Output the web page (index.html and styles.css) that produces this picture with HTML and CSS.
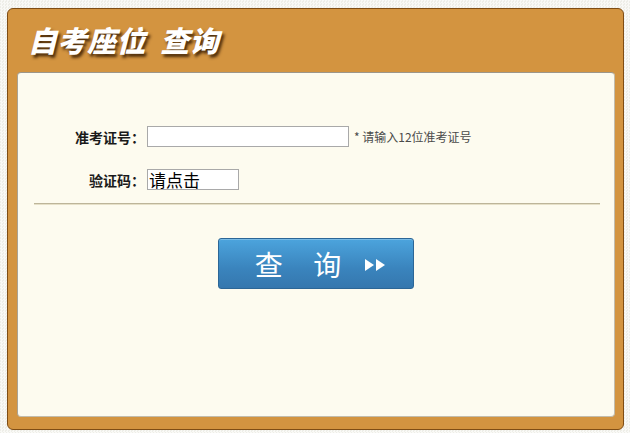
FILE: index.html
```
<!DOCTYPE html>
<html lang="zh-CN">
<head>
    <meta charset="UTF-8">
    <meta name="viewport" content="width=device-width, initial-scale=1.0">
    <title>自考座位查询</title>
    <link rel="stylesheet" href="styles.css">
</head>
<body>
    <div class="box">
        <div class="box-head">
            <h1>自考座位&nbsp; 查询</h1>
        </div>

        <div class="panel">
            <form class="query-form" onsubmit="return false">
                <div class="form-row">
                    <label class="label" for="zkzh">准考证号：</label>
                    <input type="text" id="zkzh" class="text-input long">
                    <span class="hint">* 请输入12位准考证号</span>
                </div>
                <div class="form-row">
                    <label class="label" for="yzm">验证码：</label>
                    <input type="text" id="yzm" class="text-input short" value="请点击">
                </div>

                <div class="divider"></div>

                <div class="actions">
                    <button type="submit" class="query-btn">
                        <span class="btn-text">查&nbsp; 询</span>
                        <span class="arrows"><i></i><i></i></span>
                    </button>
                </div>
            </form>
        </div>
    </div>
</body>
</html>
```

FILE: styles.css
```
body {
    margin: 0;
    padding: 8px 0 0 7px;
    font-family: "Noto Sans CJK SC", "Noto Sans", sans-serif;
    background-color: #f6f6f2;
    background-image: repeating-conic-gradient(#f9f9f6 0% 25%, #eeeee8 0% 50%);
    background-size: 3px 3px;
}

.box {
    width: 615px;
    height: 420px;
    background-color: #d39440;
    border: 1px solid #7f4d14;
    border-radius: 6px;
    display: flex;
    flex-direction: column;
}

.box-head {
    height: 63px;
    padding-left: 20px;
    padding-bottom: 4px;
    box-sizing: border-box;
    display: flex;
    align-items: center;
}

.box-head h1 {
    margin: 0;
    font-size: 29px;
    font-weight: 900;
    font-style: italic;
    color: #fff;
    letter-spacing: 0.5px;
    text-shadow: 2px 3px 3px rgba(50, 25, 0, 0.85);
}

.panel {
    height: 343px;
    margin: 0 8px 0 9px;
    background-color: #fdfbef;
    border: 1px solid #c2bcac;
    border-top-color: #9c968a;
    border-left-color: #a8a294;
    border-radius: 4px;
}

.query-form {
    padding-top: 53px;
}

.form-row {
    display: flex;
    align-items: center;
    height: 21px;
    margin-bottom: 22px;
}

.label {
    width: 127px;
    margin-right: 2px;
    text-align: right;
    font-size: 14px;
    font-weight: bold;
    color: #1a1a1a;
}

.text-input {
    box-sizing: border-box;
    height: 21px;
    padding: 0 2px;
    border: 1px solid #a9a9a9;
    background: #fff;
    font-family: "Noto Sans CJK SC", sans-serif;
}

.text-input.long {
    width: 202px;
}

.text-input.short {
    width: 92px;
    font-size: 17px;
    color: #000;
    padding: 0 1px;
    line-height: 19px;
}

.hint {
    margin-left: 5px;
    font-size: 12px;
    color: #4a4a4a;
}

.divider {
    margin: -9px 14px 0 16px;
    border-top: 1px solid #bdb59a;
    border-bottom: 1px solid #e6e0c8;
}

.actions {
    display: flex;
    justify-content: center;
    padding-top: 33px;
}

.query-btn {
    width: 196px;
    height: 51px;
    display: flex;
    align-items: center;
    justify-content: center;
    gap: 18px;
    padding: 0 0 0 8px;
    border: 1px solid #2c6696;
    border-radius: 3px;
    background: linear-gradient(to bottom, #4ca4dd, #3a84bd 60%, #3577ae);
    box-shadow: inset 0 1px 0 rgba(255, 255, 255, 0.25);
    color: #fff;
    cursor: pointer;
}

.btn-text {
    font-family: "Noto Sans CJK SC", sans-serif;
    font-size: 28px;
    letter-spacing: 6px;
    line-height: 1;
}

.arrows {
    display: flex;
    gap: 2px;
    margin-top: 2px;
}

.arrows i {
    width: 0;
    height: 0;
    border-top: 6px solid transparent;
    border-bottom: 6px solid transparent;
    border-left: 9px solid #fff;
}
```
